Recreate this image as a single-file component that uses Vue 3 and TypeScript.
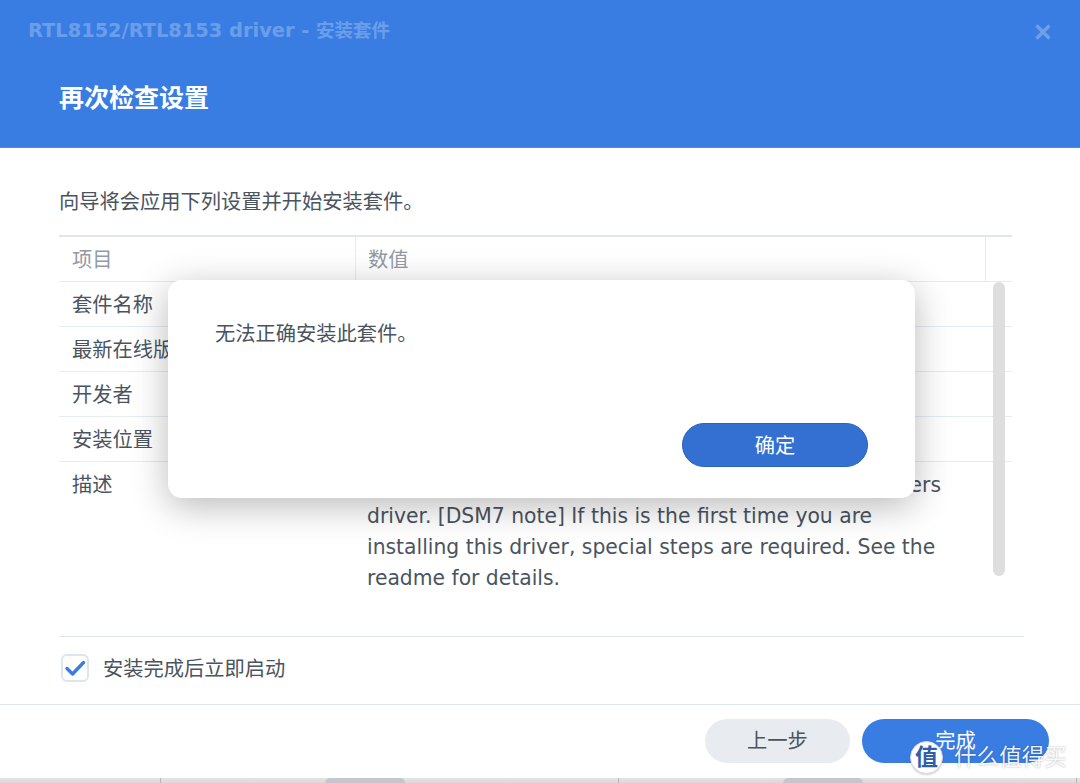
<script setup lang="ts">
interface Row { label: string; value: string[] }
const rows: Row[] = [
  { label: '套件名称', value: ['RTL8152/RTL8153 driver'] },
  { label: '最新在线版本', value: [] },
  { label: '开发者', value: [] },
  { label: '安装位置', value: [] },
  {
    label: '描述',
    value: [
      'Realtek RTL8152/RTL8153 Based USB Ethernet Adapters',
      'driver. [DSM7 note] If this is the first time you are',
      'installing this driver, special steps are required. See the',
      'readme for details.',
    ],
  },
]
</script>

<template>
  <div class="screen">
    <header class="head">
      <div class="topbar">
        <span class="app-title">RTL8152/RTL8153 driver - <span class="app-cjk">安装套件</span></span>
        <svg class="close" width="18" height="18" viewBox="0 0 18 18" aria-hidden="true">
          <path d="M2.5 2.5 15.5 15.5M15.5 2.5 2.5 15.5" stroke="#fff" stroke-width="3.2" fill="none" />
        </svg>
      </div>
      <h1 class="step">再次检查设置</h1>
    </header>

    <main class="content">
      <p class="intro">向导将会应用下列设置并开始安装套件。</p>
      <div class="table">
        <div class="tr th">
          <div class="c1">项目</div>
          <div class="c2">数值</div>
          <div class="c3"></div>
        </div>
        <div v-for="r in rows" :key="r.label" class="tr">
          <div class="c1">{{ r.label }}</div>
          <div class="c2">
            <div v-for="line in r.value" :key="line" class="line">{{ line }}</div>
          </div>
        </div>
      </div>
    </main>

    <section class="option">
      <span class="box">
        <svg width="22" height="18" viewBox="0 0 22 18" aria-hidden="true">
          <path d="M3 9.5 8.6 15 19.5 3.5" stroke="#397de3" stroke-width="3.4" stroke-linecap="round" stroke-linejoin="round" fill="none" />
        </svg>
      </span>
      <span class="option-label">安装完成后立即启动</span>
    </section>

    <footer class="foot">
      <button class="btn back">上一步</button>
      <button class="btn finish">完成</button>
    </footer>

    <div class="strip">
      <span class="tick t1"></span>
      <span class="knob k1"></span>
      <span class="tick t2"></span>
      <span class="knob k2"></span>
      <span class="tick t3"></span>
    </div>

    <div class="scrollbar"></div>

    <div class="dialog">
      <p class="msg">无法正确安装此套件。</p>
      <div class="dialog-foot">
        <button class="btn ok">确定</button>
      </div>
    </div>

    <div class="mark">
      <span class="mark-logo">值</span>
      <span class="mark-text">什么值得买</span>
    </div>
  </div>
</template>

<style>
html, body { margin: 0; background: #fff; overflow: hidden; }
</style>

<style scoped>
.screen {
  position: relative;
  width: 1080px;
  height: 783px;
  display: flex;
  flex-direction: column;
  overflow: hidden;
  background: #fff;
  color: #4a545f;
  font: 20.25px/30px "DejaVu Sans", "Noto Sans CJK SC", sans-serif;
}
.head {
  height: 148px;
  box-sizing: border-box;
  background: #397de3;
  border-bottom: 1px solid #4f8ce8;
  flex: none;
}
.topbar {
  height: 62px;
  box-sizing: border-box;
  padding: 16px 28px 0;
  display: flex;
  justify-content: space-between;
  align-items: flex-start;
}
.app-title {
  font-size: 19.4px;
  line-height: 30px;
  font-weight: 700;
  color: rgba(255, 255, 255, 0.27);
}
.app-cjk { font-size: 18.5px; }
.close { margin: 7px 0 0 0; opacity: 0.27; }
.step {
  margin: 0;
  padding-left: 59px;
  font-size: 25px;
  line-height: 74px;
  font-weight: 700;
  color: #fff;
}
.content {
  height: 488px;
  flex: none;
  box-sizing: border-box;
  padding: 39px 68px 0 59px;
}
.intro { margin: 0 0 18px; line-height: 30px; }
.table { border-top: 2px solid #e1e6ed; }
.tr {
  display: flex;
  min-height: 44px;
  border-bottom: 1px solid #e7ecf3;
  line-height: 30px;
}
.tr:last-child { border-bottom: 0; }
.c1 {
  width: 296px;
  flex: none;
  box-sizing: border-box;
  padding: 8px 0 0 13px;
}
.c2 {
  flex: 1;
  box-sizing: border-box;
  padding: 8px 0 0 12px;
  font-size: 20.32px;
  line-height: 31px;
  white-space: nowrap;
}
.c3 { width: 26px; flex: none; border-left: 1px solid #e7ecf3; }
.th { color: #929aa4; height: 44px; }
.th .c2 { border-left: 1px solid #e7ecf3; }
.option {
  height: 68px;
  box-sizing: border-box;
  margin: 0 56px 0 59px;
  border-top: 1px solid #dfe5ee;
  padding: 17px 0 0 2px;
  display: flex;
  align-items: flex-start;
  flex: none;
}
.box {
  width: 28px;
  height: 28px;
  box-sizing: border-box;
  border: 2px solid #dfe5ee;
  border-radius: 6px;
  display: flex;
  align-items: center;
  justify-content: center;
  flex: none;
}
.option-label { margin-left: 14px; line-height: 30px; }
.foot {
  height: 74px;
  box-sizing: border-box;
  border-top: 1px solid #dfe5ee;
  padding: 14px 31px 0 0;
  display: flex;
  justify-content: flex-end;
  align-items: flex-start;
  gap: 12px;
  flex: none;
}
.btn {
  height: 44px;
  box-sizing: border-box;
  border: 0;
  border-radius: 22px;
  padding: 0;
  font: inherit;
  line-height: 44px;
}
.back { width: 145px; background: #e8ecf1; color: #4a545f; }
.finish { width: 187px; background: #397de3; color: #fff; }
.strip {
  position: relative;
  height: 5px;
  flex: none;
  background: linear-gradient(#e4e4e4, #d9d9d9);
}
.tick { position: absolute; top: 0; width: 1px; height: 5px; background: #b5b5b5; }
.t1 { left: 160px; }
.t2 { left: 618px; }
.t3 { left: 1076px; }
.knob {
  position: absolute;
  top: 0;
  width: 80px;
  height: 5px;
  background: #c3c8cf;
  border-radius: 8px 8px 0 0;
}
.k1 { left: 325px; }
.k2 { left: 783px; }
.scrollbar {
  position: absolute;
  left: 993px;
  top: 282px;
  width: 12px;
  height: 294px;
  background: #dedede;
  border-radius: 6px;
}
.dialog {
  position: absolute;
  left: 168px;
  top: 280px;
  width: 747px;
  height: 218px;
  box-sizing: border-box;
  padding: 39px 47px 0;
  background: #fff;
  border-radius: 14px;
  box-shadow: 0 8px 36px rgba(0, 0, 0, 0.28);
  display: flex;
  flex-direction: column;
}
.msg { margin: 0; line-height: 30px; }
.dialog-foot {
  margin-top: auto;
  padding-bottom: 31px;
  display: flex;
  justify-content: flex-end;
}
.ok {
  width: 186px;
  background: #3370d2;
  border: 1px solid #2b63bb;
  color: #fff;
}
.mark {
  position: absolute;
  left: 910px;
  top: 741px;
  display: flex;
  align-items: center;
  gap: 11px;
}
.mark-logo {
  width: 31px;
  height: 31px;
  border-radius: 50%;
  background: #fff;
  color: #2f5fa8;
  border: 1px solid #d8d8d8;
  box-shadow: 0 1px 2px rgba(0, 0, 0, 0.18);
  font-size: 23px;
  font-weight: 700;
  line-height: 31px;
  text-align: center;
}
.mark-text {
  font-size: 22.6px;
  line-height: 31px;
  color: rgba(255, 255, 255, 0.92);
  text-shadow: 0 0 2px rgba(0, 0, 0, 0.35);
}
</style>
